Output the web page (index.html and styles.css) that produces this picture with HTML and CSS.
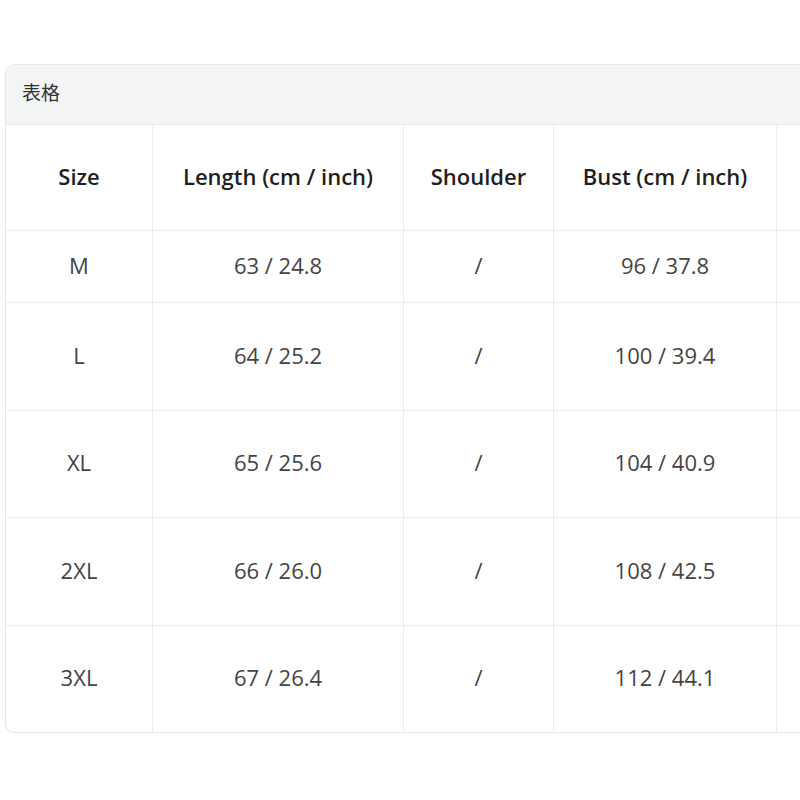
FILE: index.html
```html
<!DOCTYPE html>
<html lang="zh">
<head>
    <meta charset="UTF-8">
    <meta name="viewport" content="width=device-width, initial-scale=1.0">
    <title>表格</title>
    <link rel="stylesheet" href="styles.css">
</head>
<body>
    <div class="table-card">
        <div class="table-title">表格</div>
        <table class="size-table">
            <thead>
                <tr>
                    <th class="col-size">Size</th>
                    <th class="col-length">Length (cm / inch)</th>
                    <th class="col-shoulder">Shoulder</th>
                    <th class="col-bust">Bust (cm / inch)</th>
                    <th class="col-sleeve"></th>
                </tr>
            </thead>
            <tbody>
                <tr class="row-short">
                    <td>M</td>
                    <td>63 / 24.8</td>
                    <td>/</td>
                    <td>96 / 37.8</td>
                    <td></td>
                </tr>
                <tr>
                    <td>L</td>
                    <td>64 / 25.2</td>
                    <td>/</td>
                    <td>100 / 39.4</td>
                    <td></td>
                </tr>
                <tr>
                    <td>XL</td>
                    <td>65 / 25.6</td>
                    <td>/</td>
                    <td>104 / 40.9</td>
                    <td></td>
                </tr>
                <tr>
                    <td>2XL</td>
                    <td>66 / 26.0</td>
                    <td>/</td>
                    <td>108 / 42.5</td>
                    <td></td>
                </tr>
                <tr class="row-last">
                    <td>3XL</td>
                    <td>67 / 26.4</td>
                    <td>/</td>
                    <td>112 / 44.1</td>
                    <td></td>
                </tr>
            </tbody>
        </table>
    </div>
</body>
</html>
```

FILE: styles.css
```css
html, body {
    overflow: hidden;
}
body {
    margin: 0;
    padding: 64px 0 0 5px;
    background-color: #fff;
    font-family: "Open Sans", "Noto Sans CJK SC", sans-serif;
    color: #333;
}
.table-card {
    width: 1000px;
    border: 1px solid #e6e6e6;
    border-radius: 10px;
    overflow: hidden;
    box-shadow: 0 1px 2px rgba(0, 0, 0, 0.05);
}
.table-title {
    height: 59px;
    line-height: 56px;
    padding-left: 16px;
    background-color: #f3f4f6;
    border-bottom: 1px solid #eaeaea;
    font-size: 19px;
    color: #333;
}
.size-table {
    border-collapse: collapse;
    table-layout: fixed;
    width: 1000px;
}
.size-table th,
.size-table td {
    text-align: center;
    vertical-align: middle;
    padding: 0 0 3px;
    border-right: 1px solid #ececec;
    border-bottom: 1px solid #ececec;
    font-size: 22px;
    white-space: nowrap;
}
.size-table th {
    height: 102px;
    font-weight: 600;
    color: #1f1f1f;
}
.size-table td {
    height: 103.5px;
    color: #444;
}
.size-table .row-short td {
    height: 68px;
}
.size-table .row-last td {
    border-bottom: none;
}
.col-size { width: 146px; }
.col-length { width: 250px; }
.col-shoulder { width: 149px; }
.col-bust { width: 222px; }
.col-sleeve { width: 233px; }
```
